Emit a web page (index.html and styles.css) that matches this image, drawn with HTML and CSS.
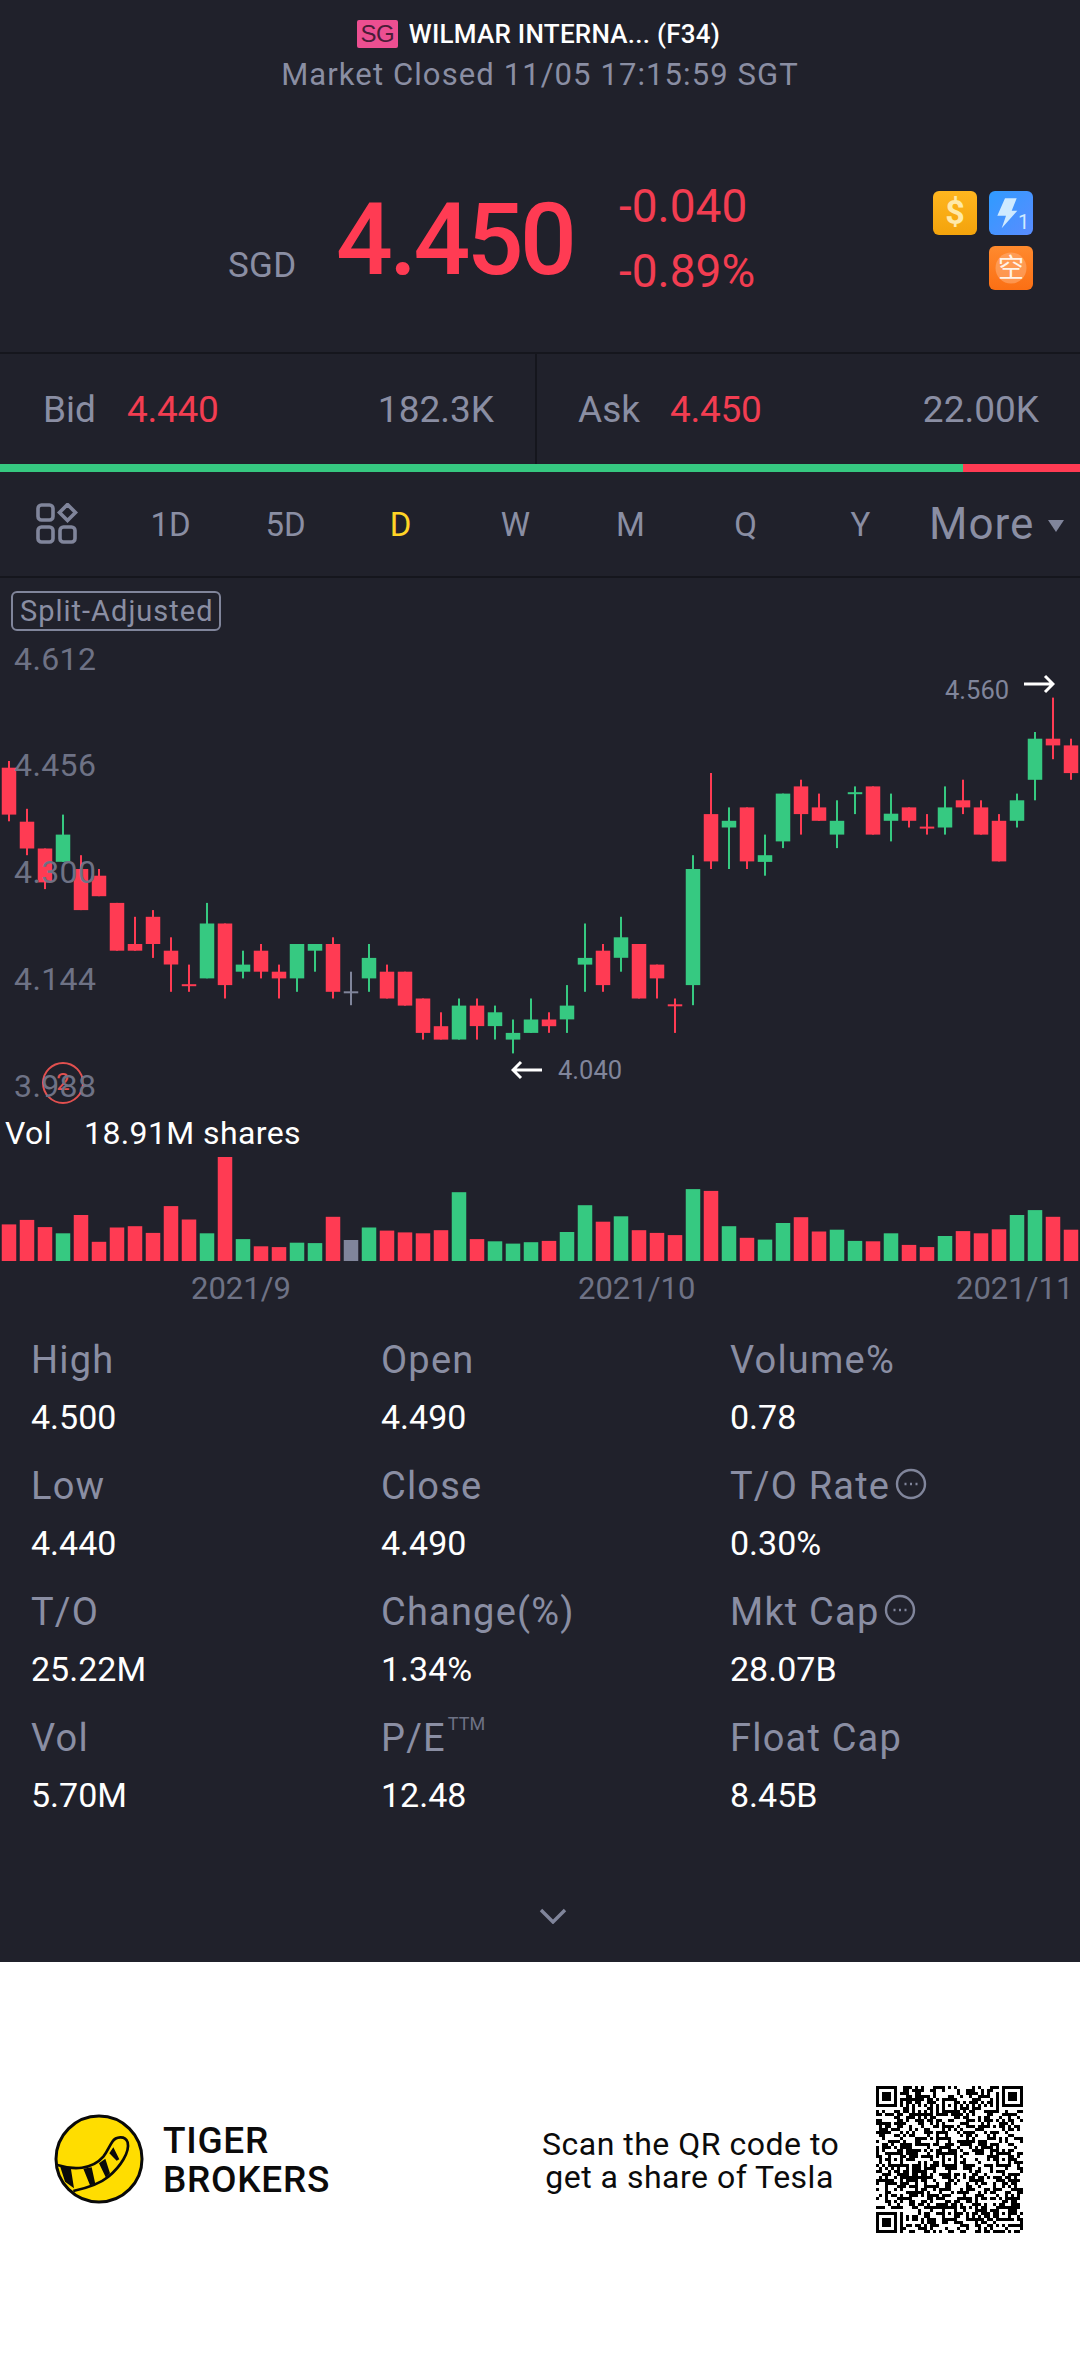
FILE: index.html
```html
<!DOCTYPE html>
<html lang="en">
<head>
<meta charset="utf-8">
<title>WILMAR INTERNA... (F34)</title>
<link rel="stylesheet" href="styles.css">
</head>
<body>
<main class="app">
  <header class="head">
    <div class="title"><span class="badge">SG</span><span class="name">WILMAR INTERNA... (F34)</span></div>
    <div class="status">Market Closed 11/05 17:15:59 SGT</div>
    <div class="quote">
      <span class="ccy">SGD</span>
      <span class="price">4.450</span>
      <div class="chg"><span>-0.040</span><span>-0.89%</span></div>
      <div class="flags">
        <svg class="flag" viewBox="0 0 44 44"><defs><linearGradient id="ga" x1="0" y1="0" x2="0" y2="1"><stop offset="0" stop-color="#ffb61f"/><stop offset="1" stop-color="#f3a30c"/></linearGradient></defs><rect width="44" height="44" rx="6" fill="url(#ga)"/><text class="flag-d" x="22" y="33" text-anchor="middle">$</text></svg>
        <svg class="flag" viewBox="0 0 44 44"><defs><linearGradient id="gb" x1="0" y1="0" x2="1" y2="1"><stop offset="0" stop-color="#2f9bff"/><stop offset="1" stop-color="#5a8cff"/></linearGradient></defs><rect width="44" height="44" rx="6" fill="url(#gb)"/><path d="M16 7.3H27.7L22.7 19.7H28.3L12.7 37.3L17 24.7H8.3Z" fill="#cfeaff"/><text class="flag-n" x="34.5" y="38" text-anchor="middle">1</text></svg>
        <svg class="flag flag-wide" viewBox="0 0 44 44"><defs><linearGradient id="gc" x1="0" y1="0" x2="0" y2="1"><stop offset="0" stop-color="#ff8a2e"/><stop offset="1" stop-color="#fb6f14"/></linearGradient></defs><rect width="44" height="44" rx="6" fill="url(#gc)"/><circle cx="22" cy="22" r="15.5" fill="#ffb07a" fill-opacity=".55"/><text class="flag-c" x="22" y="31" text-anchor="middle">空</text></svg>
      </div>
    </div>
  </header>

  <section class="book">
    <div class="side side-bid"><span class="bk">Bid</span><span class="bp">4.440</span><span class="bq">182.3K</span></div>
    <div class="side side-ask"><span class="bk">Ask</span><span class="bp">4.450</span><span class="bq">22.00K</span></div>
  </section>
  <div class="ratio"><i class="ratio-g"></i><i class="ratio-r"></i></div>

  <nav class="tabs">
    <svg class="grid-ico" viewBox="0 0 42 42"><rect x="2" y="2" width="15" height="15" rx="3.5"/><rect x="2" y="24" width="15" height="15" rx="3.5"/><rect x="24" y="24" width="15" height="15" rx="3.5"/><path d="M31.5 1.5L39.5 9.5L31.5 17.5L23.5 9.5Z"/></svg>
    <span class="tab">1D</span><span class="tab">5D</span><span class="tab tab-on">D</span><span class="tab">W</span><span class="tab">M</span><span class="tab">Q</span><span class="tab">Y</span>
    <span class="more">More</span><span class="tri"></span>
  </nav>

  <section class="chart">
    <svg id="plot" class="plot" viewBox="0 0 1080 732"></svg>
    <span class="split">Split-Adjusted</span>
    <span class="marker"><span>2</span></span>
    <span class="ax ax1">4.612</span>
    <span class="ax ax2">4.456</span>
    <span class="ax ax3">4.300</span>
    <span class="ax ax4">4.144</span>
    <span class="ax ax5">3.988</span>
    <span class="ext ext-lo">4.040</span>
    <span class="ext ext-hi">4.560</span>
    <svg class="arrow arrow-lo" viewBox="0 0 32 20"><path d="M31 10H2M10 2L2 10L10 18"/></svg>
    <svg class="arrow arrow-hi" viewBox="0 0 32 20"><path d="M1 10H30M22 2L30 10L22 18"/></svg>
    <div class="vol"><span class="vol-k">Vol</span><span>18.91M shares</span></div>
    <span class="date d1">2021/9</span>
    <span class="date d2">2021/10</span>
    <span class="date d3">2021/11</span>
  </section>

  <section class="stats">
    <div class="stat"><div class="k">High</div><div class="v">4.500</div></div>
    <div class="stat"><div class="k">Open</div><div class="v">4.490</div></div>
    <div class="stat"><div class="k">Volume%</div><div class="v">0.78</div></div>
    <div class="stat"><div class="k">Low</div><div class="v">4.440</div></div>
    <div class="stat"><div class="k">Close</div><div class="v">4.490</div></div>
    <div class="stat"><div class="k">T/O Rate<svg class="more-ico" viewBox="0 0 32 32"><circle cx="16" cy="16" r="14"/><path d="M9.5 16h2M15 16h2M20.5 16h2"/></svg></div><div class="v">0.30%</div></div>
    <div class="stat"><div class="k">T/O</div><div class="v">25.22M</div></div>
    <div class="stat"><div class="k">Change(%)</div><div class="v">1.34%</div></div>
    <div class="stat"><div class="k">Mkt Cap<svg class="more-ico" viewBox="0 0 32 32"><circle cx="16" cy="16" r="14"/><path d="M9.5 16h2M15 16h2M20.5 16h2"/></svg></div><div class="v">28.07B</div></div>
    <div class="stat"><div class="k">Vol</div><div class="v">5.70M</div></div>
    <div class="stat"><div class="k">P/E<sup class="ttm">TTM</sup></div><div class="v">12.48</div></div>
    <div class="stat"><div class="k">Float Cap</div><div class="v">8.45B</div></div>
  </section>
  <div class="expand"><svg class="chev" viewBox="0 0 28 16"><path d="M2 2L14 14L26 2"/></svg></div>
</main>

<footer class="foot">
  <svg class="logo" viewBox="0 0 300 300">
    <circle cx="147" cy="147" r="129" fill="#ffdd00" stroke="#0a0a0a" stroke-width="9"/>
    <path d="M22 165C70 180 125 180 160 140C172 125 178 108 187 95C197 80 225 75 233 97C240 125 212 170 175 200C145 225 105 235 70 243" fill="#ffdd00" stroke="#0a0a0a" stroke-width="8" stroke-linejoin="round"/>
    <path d="M30 168L62 172L72 235L45 215ZM100 176L125 172L136 222L120 226ZM147 160L166 146L180 190L168 203ZM178 130L190 112L208 148L200 152Z" fill="#0a0a0a"/>
  </svg>
  <div class="brand"><span>TIGER</span><span>BROKERS</span></div>
  <p class="scan">Scan the QR code to<br>get a share of Tesla</p>
  <svg id="qr" class="qr" viewBox="0 0 49 49"></svg>
</footer>
<script src="chart.js"></script>
</body>
</html>
```

FILE: styles.css
```css
* { box-sizing: border-box; }
html, body { margin: 0; padding: 0; }
body { width: 1080px; height: 2357px; overflow: hidden; background: #fff; font-family: Roboto, "Liberation Sans", sans-serif; }
.app { height: 1962px; background: #20212b; color: #8a8ea3; }

.head { height: 352px; padding-top: 20px; }
.title { display: flex; justify-content: center; align-items: center; height: 28px; gap: 11px; padding-right: 3px; }
.badge { width: 41px; height: 28px; background: #ec4f91; color: #4a1c38; border-radius: 2px; font-size: 24px; line-height: 28px; text-align: center; font-family: "Liberation Sans", sans-serif; letter-spacing: -.5px; }
.name { color: #fff; font-size: 26px; font-weight: 500; line-height: 28px; letter-spacing: .25px; }
.status { margin-top: 9px; text-align: center; font-size: 31px; line-height: 36px; letter-spacing: 1.1px; }
.quote { display: flex; align-items: flex-start; padding-left: 228px; margin-top: 87px; position: relative; }
.ccy { font-size: 35px; line-height: 40px; margin-top: 66px; width: 108px; letter-spacing: .3px; }
.price { color: #ff3b53; font-size: 100px; font-weight: 500; line-height: 100px; margin-top: 10px; width: 283px; letter-spacing: -3.6px; }
.chg { display: flex; flex-direction: column; color: #f23d51; font-size: 46px; line-height: 65px; width: 315px; margin-top: -6px; }
.flags { display: flex; flex-wrap: wrap; gap: 11px 12px; width: 100px; margin-left: -1px; margin-top: 11px; }
.flag { width: 44px; height: 44px; display: block; }
.flag-wide { margin-left: 56px; }
.flag-d { fill: #ffe9a8; font-size: 34px; font-weight: 700; font-family: Roboto, sans-serif; }
.flag-n { fill: #cfeaff; font-size: 20px; font-family: Roboto, sans-serif; }
.flag-c { fill: #fff3e8; font-size: 26px; font-family: "Noto Sans CJK SC", sans-serif; }

.book { display: flex; height: 112px; border-top: 2px solid #15161d; }
.side { display: flex; align-items: center; flex: none; font-size: 37px; }
.side-bid { width: 537px; padding-left: 43px; border-right: 2px solid #15161d; }
.side-ask { width: 543px; padding-left: 41px; }
.bk { width: 84px; }
.side-ask .bk { width: 92px; }
.bp { color: #f23d51; letter-spacing: -.3px; }
.bq { margin-left: auto; }
.side-bid .bq { margin-right: 41px; }
.side-ask .bq { margin-right: 41px; }
.ratio { display: flex; height: 8px; }
.ratio-g { width: 963px; background: #36c981; }
.ratio-r { flex: 1; background: #ff3b53; }

.tabs { display: flex; align-items: center; height: 106px; padding-left: 36px; border-bottom: 2px solid #15161d; }
.grid-ico { width: 42px; height: 42px; margin-right: 35px; fill: none; stroke: #80859b; stroke-width: 3.6; }
.tab { width: 115px; text-align: center; font-size: 33px; }
.tab-on { color: #ffd426; }
.more { font-size: 44px; margin-left: 11px; letter-spacing: 1px; }
.tri { width: 0; height: 0; margin-left: 14px; margin-top: 4px; border-left: 8.5px solid transparent; border-right: 8.5px solid transparent; border-top: 12px solid #80859b; }

.chart { position: relative; height: 732px; margin-bottom: 27px; }
.plot { position: absolute; left: 0; top: 0; width: 1080px; height: 732px; display: block; }
.up { fill: #36c981; }
.down { fill: #ff3b53; }
.flat { fill: #80859b; }
.split { position: absolute; left: 11px; top: 13px; width: 210px; height: 40px; border: 2px solid #80859b; border-radius: 6px; font-size: 29px; line-height: 36px; padding-left: 7px; white-space: nowrap; letter-spacing: 1px; }
.ax { position: absolute; left: 14px; font-size: 32px; line-height: 38px; color: #6e7285; letter-spacing: .4px; }
.ax1 { top: 62px; }
.ax2 { top: 168px; }
.ax3 { top: 275px; }
.ax4 { top: 382px; }
.ax5 { top: 489px; }
.marker { position: absolute; left: 42px; top: 484px; width: 42px; height: 42px; border: 2.5px solid #e2504f; border-radius: 50%; color: #e2504f; font-size: 24px; line-height: 37px; text-align: center; }
.ext { position: absolute; font-size: 25.5px; line-height: 32px; color: #80859b; }
.ext-lo { left: 558px; top: 476px; }
.ext-hi { left: 945px; top: 96px; }
.arrow { position: absolute; width: 32px; height: 20px; fill: none; stroke: #fff; stroke-width: 3; }
.arrow-lo { left: 511px; top: 482px; }
.arrow-hi { left: 1023px; top: 96px; }
.vol { position: absolute; left: 5px; top: 536px; display: flex; font-size: 32px; line-height: 38px; color: #fff; letter-spacing: .4px; }
.vol-k { width: 79px; }
.date { position: absolute; top: 692px; font-size: 31px; line-height: 38px; color: #6e7285; }
.d1 { left: 191px; }
.d2 { left: 578px; }
.d3 { left: 956px; }

.stats { display: grid; grid-template-columns: 350px 349px 1fr; padding-left: 31px; }
.stat { height: 126px; }
.k { display: flex; align-items: center; font-size: 38px; line-height: 46px; letter-spacing: 1.2px; white-space: nowrap; }
.v { color: #fff; font-size: 34px; line-height: 42px; margin-top: 13px; }
.more-ico { width: 32px; height: 32px; margin-left: 5px; margin-top: -4px; fill: none; stroke: #80859b; stroke-width: 2.4; }
.ttm { font-size: 18px; line-height: 18px; align-self: flex-start; color: #6e7285; margin-left: 2px; letter-spacing: 0; }
.expand { display: flex; justify-content: center; margin-top: 67px; padding-left: 26px; }
.chev { width: 28px; height: 16px; fill: none; stroke: #80859b; stroke-width: 3.4; }

.foot { display: flex; align-items: center; height: 395px; padding-left: 50px; color: #0b0b0b; }
.logo { width: 100px; height: 100px; display: block; }
.brand { display: flex; flex-direction: column; margin-left: 13px; font-size: 37px; font-weight: 500; line-height: 39px; letter-spacing: .7px; }
.scan { margin: 2px 1px 0 auto; width: 295px; text-align: center; font-size: 32px; line-height: 33px; letter-spacing: .5px; white-space: nowrap; }
.qr { width: 147px; height: 147px; margin-left: 38px; margin-right: 57px; display: block; shape-rendering: crispEdges; fill: #000; }
```

FILE: chart.js
```js
// [class, wick top, body top, body bottom, wick bottom, volume top] in source chart units
var D = [
['down',383,398,503,518,1421],['down',490,519,579,594,1411],['down',579,579,655,670,1427],['up',503,548,609,609,1441],
['down',594,625,717,717,1400],['down',625,640,686,686,1460],['down',701,701,808,808,1428],['down',732,793,808,808,1425],
['down',717,732,793,824,1440],['down',778,808,839,900,1380],['down',839,883,887,900,1410],['up',701,747,870,870,1441],
['down',747,747,885,915,1270],['up',808,839,855,870,1454],['down',793,808,855,870,1470],['down',839,855,870,915,1472],
['up',793,793,870,900,1462],['up',793,793,808,855,1463],['down',778,793,900,915,1404],['flat',855,899,903,930,1456],
['up',793,824,870,900,1428],['down',839,855,915,915,1435],['down',855,855,931,931,1439],['down',915,915,992,1007,1441],
['down',946,977,1007,1007,1434],['up',915,931,1007,1007,1349],['down',915,931,977,1007,1454],['up',931,946,977,1007,1459],
['up',962,992,1007,1038,1464],['up',915,962,992,992,1461],
['down',946,962,977,992,1458],['up',885,931,962,992,1438],['up',747,824,839,900,1378],['down',793,808,885,900,1415],
['up',732,778,824,855,1403],['down',793,793,915,915,1434],['down',839,839,870,915,1440],['down',915,928,932,992,1445],
['up',594,625,885,930,1342],['down',410,502,608,625,1346],['up',487,517,532,625,1425],['down',487,487,608,625,1451],
['up',548,594,609,640,1455],['up',456,456,563,578,1418],['down',425,440,502,548,1405],['down',456,487,517,517,1437],
['up',471,517,548,578,1433],['up',440,453,457,502,1458],['down',440,440,548,548,1459],['up',456,501,517,563,1441],
['down',487,487,517,532,1467],['down',502,530,534,548,1472],['up',440,487,532,548,1447],['down',425,471,487,502,1436],
['down',471,487,548,548,1441],['down',502,517,608,608,1432],['up',456,471,517,532,1400],['up',318,333,425,471,1389],
['down',241,333,348,379,1404],['down',333,348,410,425,1433]
];
var NS = 'http://www.w3.org/2000/svg';
var plot = document.getElementById('plot');
var TOP = 578;
function Y(z) { return 590 + z / 2.24 - TOP; }
function rect(cls, x, y, w, h) {
  var r = document.createElementNS(NS, 'rect');
  r.setAttribute('class', cls);
  r.setAttribute('x', x);
  r.setAttribute('y', y.toFixed(1));
  r.setAttribute('width', w);
  r.setAttribute('height', Math.max(h, 2).toFixed(1));
  plot.appendChild(r);
}
D.forEach(function (c, i) {
  var cx = 9 + 18 * i;
  rect(c[0], cx - 1, Y(c[1]), 2, Y(c[4]) - Y(c[1]));
  rect(c[0], cx - 7.25, Y(c[2]), 14.5, Y(c[3]) - Y(c[2]));
  rect(c[0], cx - 7.25, Y(c[5]), 14.5, Y(1503) - Y(c[5]));
});

// QR code: 49 modules
var N = 49, m = [], i, j;
var seed = 20211105;
function rnd() { seed = (seed * 1664525 + 1013904223) >>> 0; return (seed >>> 16) & 1; }
for (i = 0; i < N; i++) { m.push([]); for (j = 0; j < N; j++) m[i].push(rnd()); }
function finder(r, c) {
  for (var a = -1; a <= 7; a++) for (var b = -1; b <= 7; b++) {
    var y = r + a, x = c + b;
    if (y < 0 || x < 0 || y >= N || x >= N) continue;
    var inRing = a >= 0 && a <= 6 && b >= 0 && b <= 6;
    var dark = inRing && (a === 0 || a === 6 || b === 0 || b === 6 || (a >= 2 && a <= 4 && b >= 2 && b <= 4));
    m[y][x] = dark ? 1 : 0;
  }
}
function align(r, c) {
  for (var a = -2; a <= 2; a++) for (var b = -2; b <= 2; b++) {
    m[r + a][c + b] = (Math.max(Math.abs(a), Math.abs(b)) !== 1) ? 1 : 0;
  }
}
for (i = 8; i < N - 8; i++) { m[6][i] = (i + 1) % 2; m[i][6] = (i + 1) % 2; }
finder(0, 0); finder(0, N - 7); finder(N - 7, 0);
[[6, 24], [24, 6], [24, 24], [24, 42], [42, 24], [42, 42]].forEach(function (p) { align(p[0], p[1]); });
var d = '';
for (i = 0; i < N; i++) for (j = 0; j < N; j++) if (m[i][j]) d += 'M' + j + ' ' + i + 'h1v1h-1z';
var qrPath = document.createElementNS(NS, 'path');
qrPath.setAttribute('d', d);
document.getElementById('qr').appendChild(qrPath);
```
